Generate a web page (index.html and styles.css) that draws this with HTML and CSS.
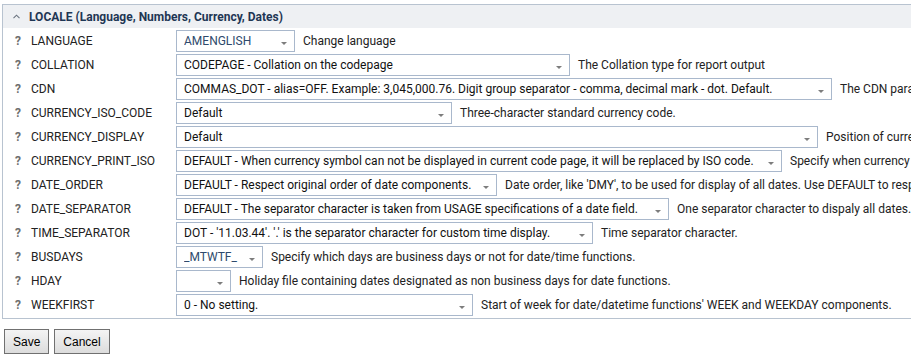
FILE: index.html
```html
<!DOCTYPE html>
<html lang="en">
<head>
<meta charset="utf-8">
<title>Locale settings</title>
<link rel="stylesheet" href="styles.css">
</head>
<body>
<section class="panel">
  <header class="panel-head">
    <svg class="chev" width="7" height="5" viewBox="0 0 7 5"><path d="M0.5 4.2 L3.5 1.2 L6.5 4.2" fill="none" stroke="#6b7480" stroke-width="1.1"/></svg>
    <span class="panel-title">LOCALE (Language, Numbers, Currency, Dates)</span>
  </header>
  <div class="rows">
    <div class="row"><span class="help">?</span><span class="label">LANGUAGE</span><div class="sel w-lang"><span class="val alt">AMENGLISH</span><i class="caret"></i></div><span class="desc">Change language</span></div>
    <div class="row"><span class="help">?</span><span class="label">COLLATION</span><div class="sel w-coll"><span class="val">CODEPAGE - Collation on the codepage</span><i class="caret"></i></div><span class="desc">The Collation type for report output</span></div>
    <div class="row"><span class="help">?</span><span class="label">CDN</span><div class="sel w-cdn"><span class="val">COMMAS_DOT - alias=OFF. Example: 3,045,000.76. Digit group separator - comma, decimal mark - dot. Default.</span><i class="caret"></i></div><span class="desc">The CDN parameter specifies the punctuation used in numbers.</span></div>
    <div class="row"><span class="help">?</span><span class="label">CURRENCY_ISO_CODE</span><div class="sel w-iso"><span class="val">Default</span><i class="caret"></i></div><span class="desc">Three-character standard currency code.</span></div>
    <div class="row"><span class="help">?</span><span class="label">CURRENCY_DISPLAY</span><div class="sel w-disp"><span class="val">Default</span><i class="caret"></i></div><span class="desc">Position of currency symbol.</span></div>
    <div class="row"><span class="help">?</span><span class="label">CURRENCY_PRINT_ISO</span><div class="sel w-print"><span class="val">DEFAULT - When currency symbol can not be displayed in current code page, it will be replaced by ISO code.</span><i class="caret"></i></div><span class="desc">Specify when currency ISO code is printed.</span></div>
    <div class="row"><span class="help">?</span><span class="label">DATE_ORDER</span><div class="sel w-order"><span class="val">DEFAULT - Respect original order of date components.</span><i class="caret"></i></div><span class="desc">Date order, like 'DMY', to be used for display of all dates. Use DEFAULT to respect original order.</span></div>
    <div class="row"><span class="help">?</span><span class="label">DATE_SEPARATOR</span><div class="sel w-dsep"><span class="val">DEFAULT - The separator character is taken from USAGE specifications of a date field.</span><i class="caret"></i></div><span class="desc">One separator character to dispaly all dates.</span></div>
    <div class="row"><span class="help">?</span><span class="label">TIME_SEPARATOR</span><div class="sel w-tsep"><span class="val">DOT - '11.03.44'. '.' is the separator character for custom time display.</span><i class="caret"></i></div><span class="desc">Time separator character.</span></div>
    <div class="row"><span class="help">?</span><span class="label">BUSDAYS</span><div class="sel w-bus"><span class="val alt">_MTWTF_</span><i class="caret"></i></div><span class="desc">Specify which days are business days or not for date/time functions.</span></div>
    <div class="row"><span class="help">?</span><span class="label">HDAY</span><div class="sel w-hday"><span class="val"></span><i class="caret"></i></div><span class="desc">Holiday file containing dates designated as non business days for date functions.</span></div>
    <div class="row"><span class="help">?</span><span class="label">WEEKFIRST</span><div class="sel w-week"><span class="val">0 - No setting.</span><i class="caret"></i></div><span class="desc">Start of week for date/datetime functions' WEEK and WEEKDAY components.</span></div>
  </div>
</section>
<div class="actions">
  <button class="btn" type="button">Save</button>
  <button class="btn" type="button">Cancel</button>
</div>
</body>
</html>
```
FILE: styles.css
```css
html, body {
  margin: 0;
  padding: 0;
  background: #ffffff;
  overflow: hidden;
}
body {
  font-family: Roboto, "Liberation Sans", Arial, sans-serif;
  font-size: 12px;
  color: #222222;
  white-space: nowrap;
}
.panel {
  margin: 4px 0 0 2px;
  width: 1200px;
  border: 1px solid #b8c3d0;
}
.panel-head {
  height: 23px;
  background: #eef0f3;
  display: flex;
  align-items: center;
  padding-left: 10px;
}
.chev {
  display: block;
  margin-right: 9px;
  margin-top: -1px;
}
.panel-title {
  font-weight: 700;
  color: #1e3654;
  font-size: 12px;
}
.rows {
  padding: 1px 0 1px 0;
}
.row {
  height: 24px;
  display: flex;
  align-items: center;
}
.help {
  width: 16px;
  padding-left: 12px;
  font-weight: 700;
  color: #6e6e6e;
  box-sizing: content-box;
}
.label {
  width: 145px;
  color: #222222;
}
.sel {
  box-sizing: border-box;
  height: 22px;
  border: 1px solid #a9b8cc;
  display: flex;
  align-items: center;
  padding-left: 7px;
  overflow: hidden;
  background: #ffffff;
}
.val {
  flex: 1;
  overflow: hidden;
  color: #111111;
}
.val.alt {
  color: #2e4a6c;
}
.caret {
  align-self: flex-end;
  margin: 0 7px 6px 4px;
  width: 0;
  height: 0;
  border-left: 3px solid transparent;
  border-right: 3px solid transparent;
  border-top: 3px solid #7d7d7d;
  flex: none;
}
.desc {
  margin-left: 8px;
  color: #222222;
}
.w-lang { width: 119px; }
.w-coll { width: 394px; }
.w-cdn { width: 656px; }
.w-iso { width: 276px; }
.w-disp { width: 642px; }
.w-print { width: 606px; }
.w-order { width: 321px; }
.w-dsep { width: 493px; }
.w-tsep { width: 417px; }
.w-bus { width: 87px; }
.w-hday { width: 55px; }
.w-week { width: 297px; }
.actions {
  display: flex;
  gap: 5px;
  margin: 10px 0 0 4px;
}
.btn {
  font-family: "Liberation Sans", Arial, sans-serif;
  font-size: 12px;
  color: #000000;
  height: 25px;
  padding: 0 8px;
  border: 1px solid #707070;
  background: linear-gradient(#f4f4f4, #dcdcdc);
  border-radius: 0;
}
```
